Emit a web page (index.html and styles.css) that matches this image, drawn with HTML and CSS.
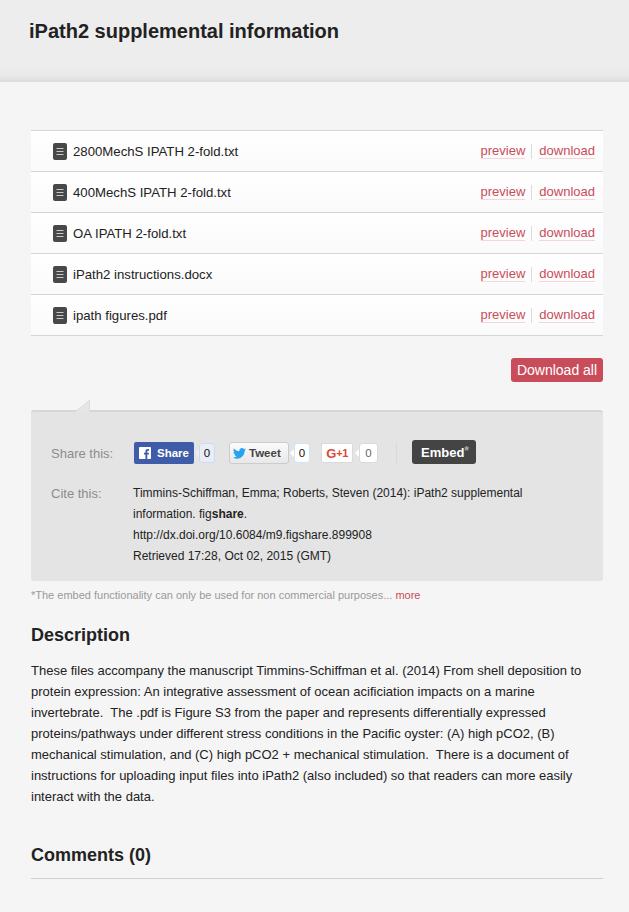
FILE: index.html
```html
<!DOCTYPE html>
<html>
	<head>
		<meta charset="UTF-8">
		<title>iPath2 supplemental information</title>
		<link rel="stylesheet" href="styles.css">
	</head>
	<body>

		<header class="top">
			<h1>iPath2 supplemental information</h1>
		</header>

		<div class="main">
			<ul class="files">
				<li>
					<svg class="doc" width="14" height="17" viewBox="0 0 14 17"><rect width="14" height="17" rx="2" fill="#484848"/><path d="M3.500 5.500h7M3.500 8.500h7M3.500 11.500h7" stroke="#c9c9c9" stroke-width="1"/></svg>
					<span class="name">2800MechS IPATH 2-fold.txt</span>
					<a href="#">preview</a><i></i><a href="#">download</a>
				</li>
				<li>
					<svg class="doc" width="14" height="17" viewBox="0 0 14 17"><rect width="14" height="17" rx="2" fill="#484848"/><path d="M3.500 5.500h7M3.500 8.500h7M3.500 11.500h7" stroke="#c9c9c9" stroke-width="1"/></svg>
					<span class="name">400MechS IPATH 2-fold.txt</span>
					<a href="#">preview</a><i></i><a href="#">download</a>
				</li>
				<li>
					<svg class="doc" width="14" height="17" viewBox="0 0 14 17"><rect width="14" height="17" rx="2" fill="#484848"/><path d="M3.500 5.500h7M3.500 8.500h7M3.500 11.500h7" stroke="#c9c9c9" stroke-width="1"/></svg>
					<span class="name">OA IPATH 2-fold.txt</span>
					<a href="#">preview</a><i></i><a href="#">download</a>
				</li>
				<li>
					<svg class="doc" width="14" height="17" viewBox="0 0 14 17"><rect width="14" height="17" rx="2" fill="#484848"/><path d="M3.500 5.500h7M3.500 8.500h7M3.500 11.500h7" stroke="#c9c9c9" stroke-width="1"/></svg>
					<span class="name">iPath2 instructions.docx</span>
					<a href="#">preview</a><i></i><a href="#">download</a>
				</li>
				<li>
					<svg class="doc" width="14" height="17" viewBox="0 0 14 17"><rect width="14" height="17" rx="2" fill="#484848"/><path d="M3.500 5.500h7M3.500 8.500h7M3.500 11.500h7" stroke="#c9c9c9" stroke-width="1"/></svg>
					<span class="name">ipath figures.pdf</span>
					<a href="#">preview</a><i></i><a href="#">download</a>
				</li>
			</ul>

			<div class="actions">
				<a class="btn-all" href="#">Download all</a>
			</div>

			<div class="panel">
				<svg class="notch" width="15" height="12" viewBox="0 0 15 12"><path d="M0 12L14 0.500V12z" fill="#e6e6e6"/><path d="M0.500 11.500L14.500 0.500V11" fill="none" stroke="#dcdcdc"/></svg>
				<div class="share">
					<span class="label">Share this:</span>
					<a class="fb" href="#">
						<svg width="12" height="12" viewBox="0 0 16 16"><rect width="16" height="16" rx="1" fill="#fff"/><path d="M11 16v-6h2l.3-2.400H11V6.100c0-.7.2-1.100 1.200-1.100h1.200V2.900c-.2 0-.9-.1-1.800-.1-1.800 0-3 1.100-3 3.100v1.700H6.600V10h2v6z" fill="#3f5ca8"/></svg>
						Share
					</a>
					<span class="count fbc">0</span>
					<a class="tw" href="#">
						<svg width="13" height="11" viewBox="0 0 24 20"><path d="M24 2.400c-.9.400-1.800.700-2.800.800 1-.6 1.800-1.600 2.200-2.700-1 .6-2 1-3.100 1.200C19.300.7 18 0 16.600 0c-2.700 0-4.900 2.200-4.900 4.900 0 .4 0 .8.100 1.100C7.700 5.800 4.100 3.900 1.700.9c-.4.700-.7 1.600-.7 2.500 0 1.700.9 3.200 2.200 4.100-.8 0-1.600-.2-2.200-.6v.1c0 2.400 1.700 4.400 3.900 4.800-.4.100-.8.200-1.300.2-.3 0-.6 0-.9-.1.600 2 2.400 3.400 4.600 3.400-1.700 1.300-3.800 2.100-6.100 2.100-.4 0-.8 0-1.200-.1C2.200 18.700 4.800 19.500 7.500 19.500c9.100 0 14-7.500 14-14v-.6c1-.7 1.800-1.600 2.500-2.500z" fill="#2aa3ef"/></svg>
						Tweet
					</a>
					<span class="count twc">0</span>
					<a class="gp" href="#"><b>G</b><em>+1</em></a>
					<span class="count gpc">0</span>
					<span class="sep"></span>
					<a class="embed" href="#">Embed<sup>*</sup></a>
				</div>
				<div class="cite">
					<span class="label">Cite this:</span>
					<p>Timmins-Schiffman, Emma; Roberts, Steven (2014): iPath2 supplemental information. fig<b>share</b>.<br>
					http://dx.doi.org/10.6084/m9.figshare.899908<br>
					Retrieved 17:28, Oct 02, 2015 (GMT)</p>
				</div>
			</div>

			<p class="note">*The embed functionality can only be used for non commercial purposes... <a href="#">more</a></p>

			<h2>Description</h2>
			<p class="desc">These files accompany the manuscript Timmins-Schiffman et al. (2014) From shell deposition to protein expression: An integrative assessment of ocean acificiation impacts on a marine invertebrate.&nbsp; The .pdf is Figure S3 from the paper and represents differentially expressed proteins/pathways under different stress conditions in the Pacific oyster: (A) high pCO2, (B) mechanical stimulation, and (C) high pCO2 + mechanical stimulation.&nbsp; There is a document of instructions for uploading input files into iPath2 (also included) so that readers can more easily interact with the data.</p>

			<h2 class="comments">Comments (0)</h2>
		</div>

	</body>
</html>
```

FILE: styles.css
```css
*{
	margin: 0;
	padding: 0;
	box-sizing: border-box;
}
body{
	background: #f5f5f5;
	font-family: "Liberation Sans", Arial, sans-serif;
	color: #222;
	overflow: hidden;
}
a{
	text-decoration: none;
}
.top{
	height: 82px;
	padding: 19px 29px 0;
	background: linear-gradient(#ededed 82%, #e9e9e9 93%, #dcdcdc);
}
.top h1{
	font-size: 20px;
	line-height: 24px;
	color: #222;
}
.main{
	padding: 48px 26px 0 31px;
}
.files{
	list-style: none;
	border-top: 1px solid #d6d6d6;
}
.files li{
	display: flex;
	align-items: center;
	height: 41px;
	padding: 0 8px 0 22px;
	background: linear-gradient(#fff, #fafafa);
	border-bottom: 1px solid #d6d6d6;
	font-size: 13.200px;
}
.doc{
	margin-right: 6px;
}
.name{
	flex: 1;
	color: #222;
}
.files a{
	color: #c84c5a;
	font-size: 13px;
	line-height: 15px;
	border-bottom: 1px solid #f5d5d8;
}
.files i{
	width: 1px;
	height: 15px;
	margin: 0 7px 0 6px;
	background: #dcdcdc;
}
.actions{
	display: flex;
	justify-content: flex-end;
	padding-top: 22px;
}
.btn-all{
	width: 92px;
	height: 24px;
	line-height: 24px;
	text-align: center;
	background: #c94c5b;
	border-radius: 3px;
	color: #fff;
	font-size: 14px;
}
.panel{
	position: relative;
	height: 171px;
	margin-top: 28px;
	padding: 30px 20px 0;
	background: #e4e4e4;
	border-top: 2px solid #d6d6d6;
	border-radius: 3px;
}
.notch{
	position: absolute;
	left: 44px;
	top: -12px;
}
.label{
	width: 82px;
	flex: none;
	color: #8c8c8c;
	font-size: 13px;
}
.share{
	display: flex;
	align-items: center;
	height: 22px;
}
.share .label{
	width: 83px;
}
.fb, .tw, .gp, .embed{
	display: flex;
	align-items: center;
	height: 22px;
	font-weight: bold;
	font-size: 11.500px;
}
.fb{
	width: 60px;
	padding-left: 5px;
	gap: 6px;
	background: #3f5ca8;
	border-radius: 2px;
	color: #fff;
}
.tw{
	width: 60px;
	margin-left: 14px;
	padding-left: 3px;
	gap: 3px;
	background: linear-gradient(#fbfbfb, #e8e8e8);
	border: 1px solid #ccc;
	border-radius: 3px;
	color: #444;
}
.gp{
	justify-content: center;
	width: 32px;
	height: 20px;
	margin-left: 11px;
	background: #fff;
	border: 1px solid #dadada;
	border-radius: 2px;
	color: #dc4a38;
}
.gp b{
	font-size: 13px;
}
.gp em{
	font-style: normal;
	font-size: 11px;
	letter-spacing: -.5px;
}
.count{
	position: relative;
	display: block;
	width: 16px;
	height: 20px;
	margin-left: 5px;
	line-height: 18px;
	text-align: center;
	font-size: 11.500px;
	background: #fff;
	border: 1px solid #dbe3f2;
	border-radius: 3px;
	color: #111;
}
.count:before{
	content: "";
	position: absolute;
	left: -5px;
	top: 5px;
	border-style: solid;
	border-width: 4px 4px 4px 0;
	border-color: transparent #fff transparent transparent;
}
.fbc{
	background: #e9edf7;
	border-color: #d0d9ee;
}
.fbc:before{
	border-right-color: #e9edf7;
}
.twc{
	border-color: #cfe4f7;
}
.gpc{
	width: 19px;
	margin-left: 6px;
	border-color: #dadada;
	color: #666;
}
.sep{
	width: 1px;
	height: 22px;
	margin: 0 15px 0 18px;
	background: #dadada;
}
.embed{
	width: 64px;
	height: 24px;
	margin-bottom: 2px;
	padding-left: 9px;
	background: #444;
	border-radius: 3px;
	color: #fff;
	font-size: 13px;
}
.embed sup{
	align-self: flex-start;
	margin-top: 5px;
	color: #aaa;
	font-size: 12px;
	line-height: 12px;
}
.cite{
	display: flex;
	margin-top: 19px;
}
.cite .label{
	padding-top: 3px;
}
.cite p{
	font-size: 12px;
	line-height: 21px;
	color: #222;
	max-width: 420px;
}
.note{
	margin-top: 7px;
	font-size: 11px;
	line-height: 14px;
	color: #999;
}
.note a{
	color: #c84c5a;
}
h2{
	margin-top: 22px;
	font-size: 18px;
	line-height: 22px;
	color: #222;
}
.desc{
	margin-top: 14px;
	font-size: 13px;
	line-height: 21px;
	color: #222;
}
h2.comments{
	margin-top: 37px;
	padding-bottom: 12px;
	border-bottom: 1px solid #d0d0d0;
}
```
